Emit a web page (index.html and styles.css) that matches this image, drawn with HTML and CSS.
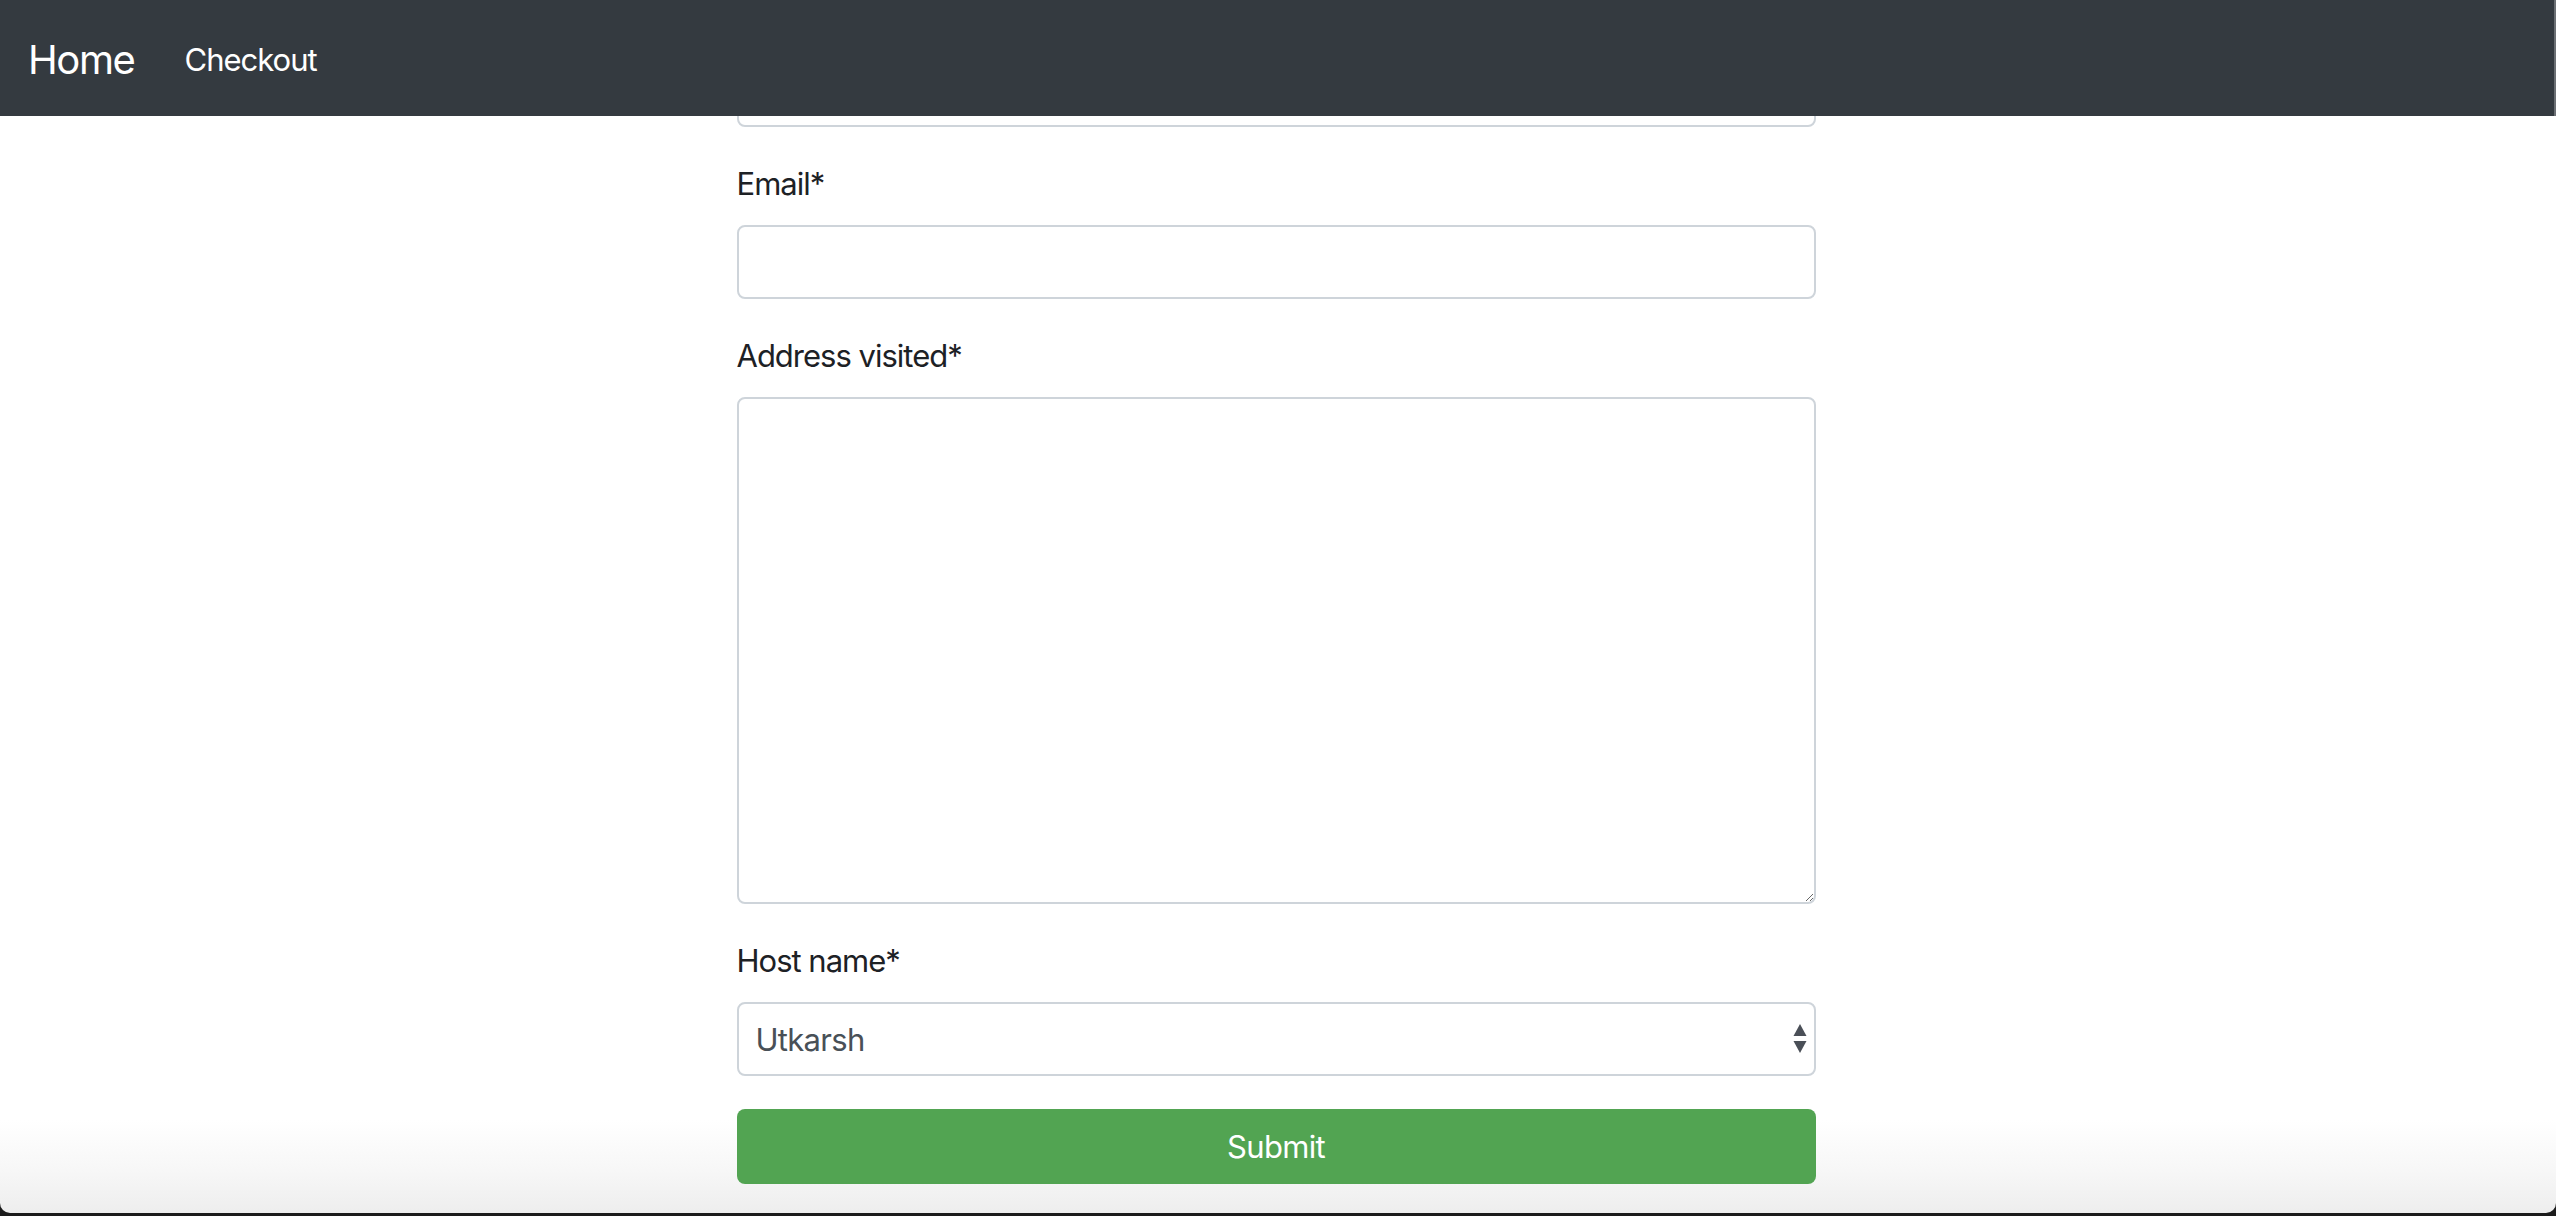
FILE: index.html
```html
<!DOCTYPE html>
<html lang="en">
<head>
<meta charset="utf-8">
<title>Checkin</title>
<link rel="stylesheet" href="styles.css">
</head>
<body>
<nav class="navbar">
  <a class="brand" href="#">Home</a>
  <a class="nav-link" href="#">Checkout</a>
</nav>
<main class="container">
  <form class="form">
    <div class="form-group">
      <input class="control" id="name" type="text" aria-label="Name">
    </div>
    <div class="form-group">
      <label class="label" for="email">Email*</label>
      <input class="control" id="email" type="email">
    </div>
    <div class="form-group">
      <label class="label" for="address">Address visited*</label>
      <textarea class="control textarea" id="address"></textarea>
    </div>
    <div class="form-group">
      <label class="label" for="host">Host name*</label>
      <div class="select-wrap">
        <select class="control select" id="host">
          <option>Utkarsh</option>
        </select>
        <svg class="select-arrows" width="14" height="32" viewBox="0 0 14 32" aria-hidden="true">
          <path d="M7 1 L13.5 13 L0.5 13 Z" fill="#4a4f57"/>
          <path d="M0.5 18 L13.5 18 L7 30 Z" fill="#4a4f57"/>
        </svg>
      </div>
    </div>
    <button class="btn-submit" type="button">Submit</button>
  </form>
</main>
<div class="window-edge" aria-hidden="true"></div>
</body>
</html>
```

FILE: styles.css
```css
html {
  height: 100%;
  overflow: hidden;
}

body {
  margin: 0;
  padding: 0;
  min-height: 100vh;
  font-family: Inter, "Noto Sans", "Liberation Sans", sans-serif;
  color: #212529;
  background: linear-gradient(to bottom, #ffffff 0, #ffffff 1120px, #f7f7f7 1170px, #ededed 1216px) fixed;
}

.navbar {
  position: fixed;
  top: 0;
  left: 0;
  right: 0;
  height: 116px;
  background: #343a40;
  display: flex;
  align-items: center;
  padding: 0 0 0 28px;
  gap: 50px;
  z-index: 10;
  border-right: 2px solid #6b6f74;
}

.brand {
  color: #ffffff;
  text-decoration: none;
  font-size: 40px;
  line-height: 1;
  letter-spacing: -1.4px;
  padding-top: 4px;
}

.nav-link {
  color: #ffffff;
  text-decoration: none;
  font-size: 31px;
  line-height: 1;
  letter-spacing: -1px;
  padding-top: 2px;
}

.container {
  width: 1079px;
  margin: 0 auto;
  padding-right: 4px;
}

.form {
  padding-top: 53px;
  display: flex;
  flex-direction: column;
}

.form-group {
  display: flex;
  flex-direction: column;
  margin-bottom: 33px;
}

.label {
  font-size: 31px;
  line-height: 48px;
  margin-bottom: 17px;
  color: #1d2125;
  letter-spacing: -1px;
}

.control {
  box-sizing: border-box;
  width: 100%;
  height: 74px;
  border: 2px solid #ced4da;
  border-radius: 8px;
  background: #ffffff;
  font-family: inherit;
  font-size: 31px;
  color: #495057;
  padding: 0 16px;
  outline: none;
  margin: 0;
}

.textarea {
  height: 507px;
  resize: vertical;
  padding: 12px 16px;
}

.select-wrap {
  position: relative;
}

.select {
  appearance: none;
  -webkit-appearance: none;
  letter-spacing: -0.7px;
  padding-left: 17px;
}

.select-arrows {
  position: absolute;
  right: 9px;
  top: 21px;
  pointer-events: none;
}

.btn-submit {
  box-sizing: border-box;
  width: 100%;
  height: 75px;
  border: none;
  border-radius: 8px;
  background: #52a452;
  color: #ffffff;
  font-family: inherit;
  font-size: 31px;
  letter-spacing: -0.7px;
  cursor: pointer;
}

.window-edge {
  position: fixed;
  left: 0;
  right: 0;
  bottom: 3px;
  height: 20px;
  pointer-events: none;
  border-radius: 0 0 10px 10px;
  box-shadow: 0 0 0 30px #1c1c1c;
  clip-path: inset(0 -30px -30px -30px);
}
```
